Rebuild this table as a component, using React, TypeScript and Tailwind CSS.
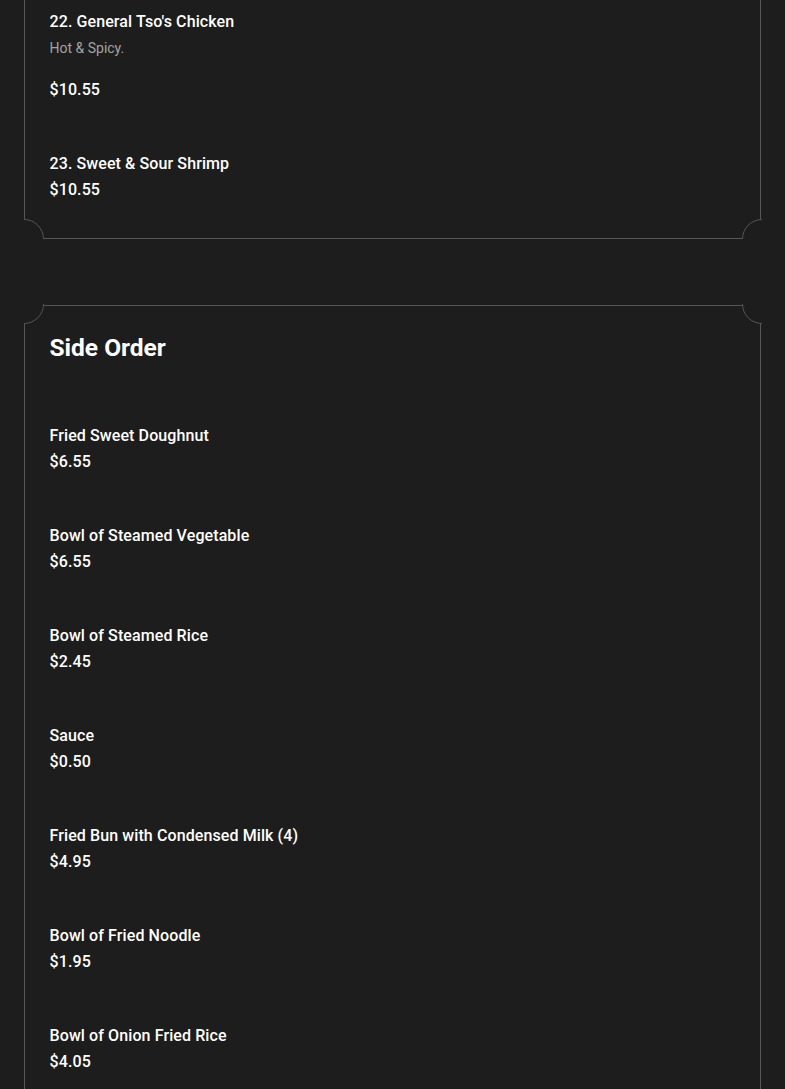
import React from 'react';

type Item = { name: string; desc?: string; price: string };

const MAIN_TAIL: Item[] = [
  { name: "22. General Tso's Chicken", desc: 'Hot & Spicy.', price: '$10.55' },
  { name: '23. Sweet & Sour Shrimp', price: '$10.55' },
];

const SIDE_ORDER: Item[] = [
  { name: 'Fried Sweet Doughnut', price: '$6.55' },
  { name: 'Bowl of Steamed Vegetable', price: '$6.55' },
  { name: 'Bowl of Steamed Rice', price: '$2.45' },
  { name: 'Sauce', price: '$0.50' },
  { name: 'Fried Bun with Condensed Milk (4)', price: '$4.95' },
  { name: 'Bowl of Fried Noodle', price: '$1.95' },
  { name: 'Bowl of Onion Fried Rice', price: '$4.05' },
];

// scalloped corner: hides the straight border and draws an inward arc
function Corner({ pos }: { pos: 'tl' | 'tr' | 'bl' | 'br' }) {
  const box = {
    tl: '-top-[1.5px] -left-[1.5px]',
    tr: '-top-[1.5px] -right-[1.5px]',
    bl: '-bottom-[1.5px] -left-[1.5px]',
    br: '-bottom-[1.5px] -right-[1.5px]',
  }[pos];
  const circle = {
    tl: '-top-5 -left-5',
    tr: '-top-5 -right-5',
    bl: '-bottom-5 -left-5',
    br: '-bottom-5 -right-5',
  }[pos];
  return (
    <div className={`absolute ${box} w-5 h-5 overflow-hidden bg-[#1d1d1d]`}>
      <div className={`absolute ${circle} w-10 h-10 rounded-full border-[1.5px] border-[#565656]`} />
    </div>
  );
}

function MenuCard({ className = '', children }: { className?: string; children: React.ReactNode }) {
  return (
    <div className={`relative border-[1.5px] border-[#565656] px-[24.5px] ${className}`}>
      <Corner pos="tl" />
      <Corner pos="tr" />
      <Corner pos="bl" />
      <Corner pos="br" />
      {children}
    </div>
  );
}

function MenuItem({ item }: { item: Item }) {
  return (
    <div className="text-[16px] leading-[26px] tracking-[0.1px]">
      <p className="font-medium text-white">{item.name}</p>
      {item.desc && <p className="text-[14px] tracking-normal text-[#a3a3a3]">{item.desc}</p>}
      <p className={`font-medium text-white ${item.desc ? 'mt-4' : ''}`}>{item.price}</p>
    </div>
  );
}

export default function App() {
  return (
    <div
      className="min-h-screen bg-[#1d1d1d] px-6 overflow-hidden"
      style={{ fontFamily: 'Roboto, "Liberation Sans", sans-serif' }}
    >
      <MenuCard className="-mt-[59px] pt-[66.5px] pb-[35px]">
        <div className="flex flex-col gap-12">
          {MAIN_TAIL.map((it) => (
            <MenuItem key={it.name} item={it} />
          ))}
        </div>
      </MenuCard>

      <MenuCard className="mt-[66px] pt-[26px] pb-10">
        <h2 className="text-[24.5px] leading-[32px] font-bold text-white">Side Order</h2>
        <div className="mt-[59px] flex flex-col gap-12">
          {SIDE_ORDER.map((it) => (
            <MenuItem key={it.name} item={it} />
          ))}
        </div>
      </MenuCard>
    </div>
  );
}
